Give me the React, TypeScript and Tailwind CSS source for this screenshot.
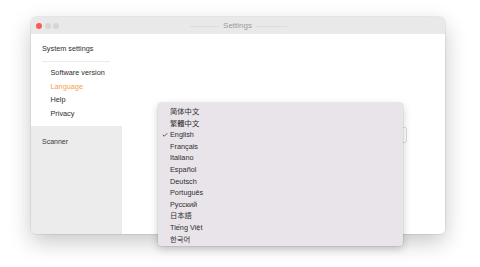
import { Check } from "lucide-react";

const navItems = [
  { label: "Software version", active: false },
  { label: "Language", active: true },
  { label: "Help", active: false },
  { label: "Privacy", active: false },
];

const languages = [
  "简体中文",
  "繁體中文",
  "English",
  "Français",
  "Italiano",
  "Español",
  "Deutsch",
  "Português",
  "Русский",
  "日本語",
  "Tiếng Việt",
  "한국어",
];

const font = {
  fontFamily: '"Liberation Sans", "Noto Sans CJK SC", "Noto Sans CJK KR", sans-serif',
};

export default function App() {
  return (
    <div className="relative w-[480px] h-[267px] bg-white overflow-hidden" style={font}>
      <div className="ml-[31px] mt-[17px] w-[414px] h-[217px] rounded-[5px] bg-white overflow-hidden flex flex-col shadow-[0_8px_22px_rgba(0,0,0,0.22),0_0_0_0.5px_rgba(0,0,0,0.12)]">
        {/* title bar */}
        <div className="relative h-[17px] bg-[#e9e9e9] flex items-center justify-center">
          <div className="absolute left-[5px] top-[6px] flex gap-[2.5px]">
            <span className="w-[6px] h-[6px] rounded-full bg-[#fc5c57]" />
            <span className="w-[6px] h-[6px] rounded-full bg-[#d6d6d6]" />
            <span className="w-[6px] h-[6px] rounded-full bg-[#d6d6d6]" />
          </div>
          <div className="flex items-center gap-[4px] ml-[1px] mt-[1px]">
            <span className="w-[29px] h-px bg-[#dcdcdc]" />
            <span className="text-[8px] leading-none text-[#999]">Settings</span>
            <span className="w-[31px] h-px bg-[#dcdcdc]" />
          </div>
        </div>

        <div className="flex flex-1">
          {/* sidebar */}
          <div className="w-[91px] flex flex-col">
            <div className="h-[92px] bg-white">
              <div className="pt-[10px] pl-[11px] text-[7.3px] leading-[10px] text-[#2e2e2e]">
                System settings
              </div>
              <div className="ml-[11px] mt-[6.5px] w-[68px] h-px bg-[#ececec]" />
              <ul className="mt-[4.5px] pl-[19.5px]">
                {navItems.map((item) => (
                  <li
                    key={item.label}
                    className={`text-[7.3px] leading-[13.7px] ${
                      item.active ? "text-[#f5a04c]" : "text-[#2e2e2e]"
                    }`}
                  >
                    {item.label}
                  </li>
                ))}
              </ul>
            </div>
            <div className="flex-1 bg-[#ececec] pt-[10.5px] pl-[11px] text-[7px] leading-[10px] text-[#3a3a3a]">
              Scanner
            </div>
          </div>

          {/* content */}
          <div className="flex-1 bg-white flex justify-end pt-[93px] pr-[38px]">
            <div className="w-[150px] h-[16px] rounded-[2px] border border-[#dcdcdc] bg-white" />
          </div>
        </div>
      </div>

      {/* open language menu */}
      <div className="absolute left-[158px] top-[103px] w-[245px] h-[143px] rounded-[3px] bg-[#e9e4ea] pt-[3px] shadow-[0_3px_8px_rgba(0,0,0,0.2),0_0_0_0.5px_rgba(0,0,0,0.1)]">
        {languages.map((lang) => (
          <div
            key={lang}
            className="relative pl-[12px] text-[7.3px] leading-[11.6px] text-[#2e2e2e]"
          >
            {lang === "English" && (
              <Check
                className="absolute left-[4px] top-[3px] text-[#2e2e2e]"
                size={6}
                strokeWidth={3}
              />
            )}
            {lang}
          </div>
        ))}
      </div>
    </div>
  );
}
